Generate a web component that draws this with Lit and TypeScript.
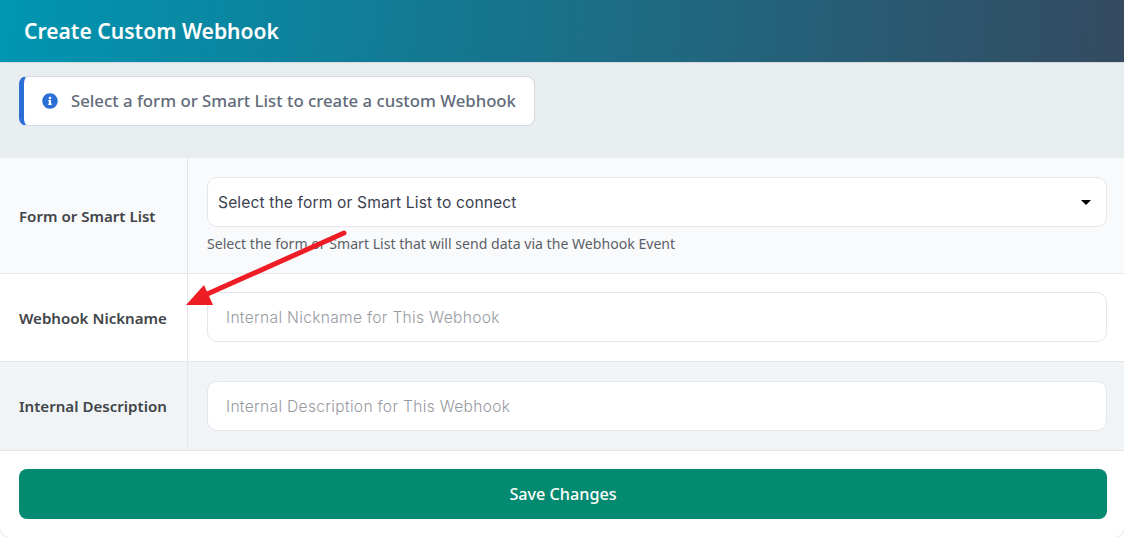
import { LitElement, html, css } from 'lit';
import { customElement } from 'lit/decorators.js';

@customElement('app-root')
export class AppRoot extends LitElement {
  private rows = [
    { label: 'Form or Smart List', cls: 'tall' },
    { label: 'Webhook Nickname', cls: 'plain', placeholder: 'Internal Nickname for This Webhook' },
    { label: 'Internal Description', cls: 'shaded', placeholder: 'Internal Description for This Webhook' },
  ];

  render() {
    return html`
      <div class="card">
        <header>Create Custom Webhook</header>
        <div class="band">
          <div class="notice">
            <svg class="info" viewBox="0 0 512 512" width="16" height="16">
              <path
                fill="#2b6fd6"
                d="M256 8C119 8 8 119 8 256s111 248 248 248 248-111 248-248S393 8 256 8zm0 110c23.200 0 42 18.800 42 42s-18.800 42-42 42-42-18.800-42-42 18.800-42 42-42zm56 254c0 6.600-5.400 12-12 12h-88c-6.600 0-12-5.400-12-12v-24c0-6.600 5.400-12 12-12h12v-64h-12c-6.600 0-12-5.400-12-12v-24c0-6.600 5.400-12 12-12h64c6.600 0 12 5.400 12 12v100h12c6.600 0 12 5.400 12 12v24z"
              />
            </svg>
            <span>Select a form or Smart List to create a custom Webhook</span>
          </div>
        </div>
        ${this.rows.map(
          (row) => html`
            <div class="row ${row.cls}">
              <div class="label">${row.label}</div>
              <div class="field">
                ${row.placeholder
                  ? html`<input class="control" placeholder=${row.placeholder} />`
                  : html`
                      <div class="control select">
                        <span>Select the form or Smart List to connect</span>
                        <i class="caret"></i>
                      </div>
                      <div class="help">Select the form or Smart List that will send data via the Webhook Event</div>
                    `}
              </div>
            </div>
          `,
        )}
        <footer><button>Save Changes</button></footer>
      </div>
      <svg class="arrow" viewBox="0 0 1124 537" width="1124" height="537">
        <line x1="344" y1="233" x2="205" y2="295" stroke="#ee1c25" stroke-width="5" stroke-linecap="round" />
        <polygon points="186,305 204,285 213,305" fill="#ee1c25" />
      </svg>
    `;
  }

  static styles = css`
    :host {
      display: block;
      position: relative;
      width: 1124px;
      height: 537px;
      overflow: hidden;
      background: #fff;
      font-family: 'Noto Sans', sans-serif;
    }

    .card {
      height: 537px;
      box-sizing: border-box;
      display: flex;
      flex-direction: column;
      background: #fff;
      border-radius: 0 0 10px 10px;
      box-shadow: 0 0 0 1px #eceef1;
      overflow: hidden;
    }

    header {
      height: 63px;
      box-sizing: border-box;
      flex: none;
      display: flex;
      align-items: center;
      padding: 0 24px 1px;
      color: #fff;
      font-size: 21.1px;
      font-weight: 600;
      background: linear-gradient(97deg, #0096b2 0%, #344a60 100%);
      border-bottom: 1px solid #d5d9dd;
    }

    .band {
      height: 95px;
      flex: none;
      box-sizing: border-box;
      padding: 13px 19px;
      background: #e8edf0;
    }

    .notice {
      width: 516px;
      height: 50px;
      box-sizing: border-box;
      display: flex;
      align-items: center;
      gap: 13px;
      padding: 0 0 1px 18px;
      background: #fff;
      border: 1px solid #d5d8de;
      border-left: 5px solid #2b6fd6;
      border-radius: 8px;
      color: #626b7a;
      font-size: 16.75px;
      font-weight: 500;
    }

    .row {
      flex: none;
      display: flex;
      box-sizing: border-box;
      border-bottom: 1px solid #e4e6e9;
    }

    .tall {
      height: 116px;
      background: #f9fafc;
    }

    .plain {
      height: 88px;
      background: #fff;
    }

    .plain .field {
      padding-top: 18px;
    }

    .shaded {
      height: 89px;
      background: #f1f4f7;
    }

    .label {
      width: 188px;
      flex: none;
      box-sizing: border-box;
      display: flex;
      align-items: center;
      padding-left: 19px;
      border-right: 1px solid #e4e6e9;
      color: #414448;
      font-size: 15.1px;
      font-weight: 600;
    }

    .field {
      flex: 1;
      padding: 19px 17px 0 19px;
    }

    .control {
      display: block;
      width: 100%;
      height: 50px;
      box-sizing: border-box;
      padding: 0 18px;
      background: #fff;
      border: 1px solid #e4e6e9;
      border-radius: 10px;
      font-family: 'Inter', sans-serif;
      font-size: 15.6px;
      font-weight: 300;
      letter-spacing: 0.3px;
      outline: none;
    }

    .control::placeholder {
      color: #979aa1;
    }

    .select {
      display: flex;
      align-items: center;
      justify-content: space-between;
      padding: 0 15px 0 10px;
      color: #3c4250;
      font-weight: 400;
      letter-spacing: 0.13px;
    }

    .caret {
      width: 0;
      height: 0;
      border-left: 5px solid transparent;
      border-right: 5px solid transparent;
      border-top: 5px solid #000;
    }

    .help {
      margin-top: 7px;
      color: #5c5f66;
      font-size: 14.1px;
    }

    footer {
      flex: 1;
      padding: 18px 17px 0 19px;
    }

    button {
      display: block;
      width: 100%;
      height: 50px;
      border: 0;
      border-radius: 8px;
      background: #038a70;
      color: #fff;
      font-family: 'Noto Sans', sans-serif;
      font-size: 16.2px;
      font-weight: 500;
    }

    .arrow {
      position: absolute;
      left: 0;
      top: 0;
      pointer-events: none;
    }
  `;
}

declare global {
  interface HTMLElementTagNameMap {
    'app-root': AppRoot;
  }
}
